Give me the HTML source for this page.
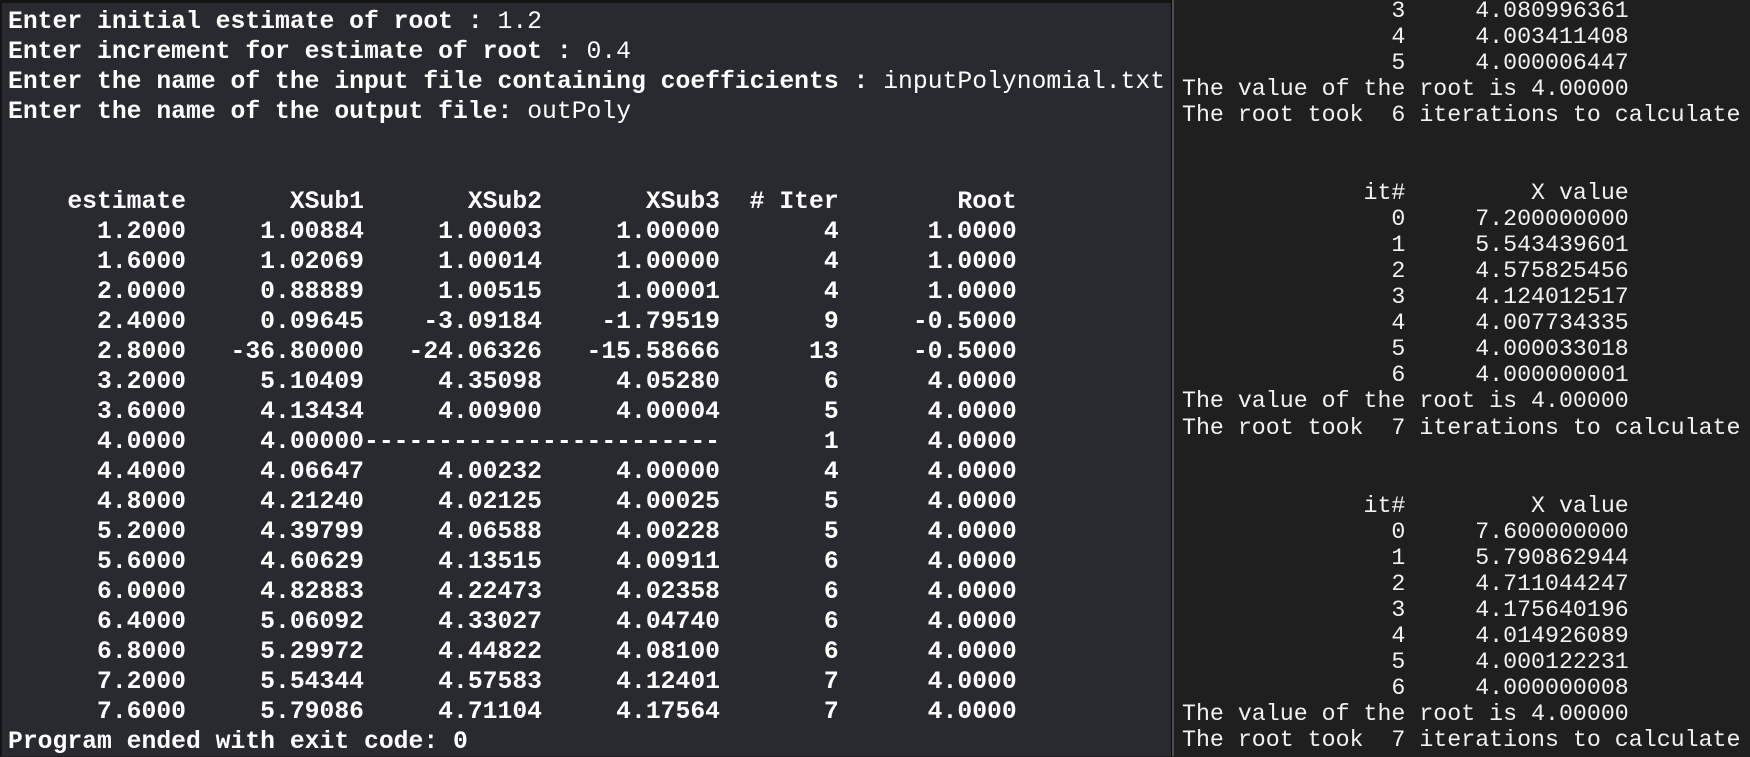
<!DOCTYPE html>
<html><head><meta charset="utf-8"><style>
html,body{margin:0;padding:0;width:1750px;height:756px;overflow:hidden;background:#1f1f1f;}
#left{position:absolute;left:0;top:0;width:1171px;height:756px;background:#292a30;border-top:3px solid #141414;box-sizing:border-box;border-left:2px solid #141414;}
#div1{position:absolute;left:1171px;top:0;width:1px;height:756px;background:#0c0c0c;}
#div2{position:absolute;left:1172px;top:0;width:2px;height:756px;background:#4e4e4e;}
pre{margin:0;position:absolute;font-family:"Liberation Mono",monospace;white-space:pre;}
#lt{left:8px;top:7px;font-size:24.72px;line-height:30px;font-weight:bold;color:#fff;}
#lt span{font-weight:normal;}
#rt{left:1182px;top:-2px;font-size:23.27px;line-height:26.03px;color:#f2f2f2;}
</style></head><body>
<div id="left"></div><div id="div1"></div><div id="div2"></div>
<pre id="lt">Enter initial estimate of root : <span>1.2</span>
Enter increment for estimate of root : <span>0.4</span>
Enter the name of the input file containing coefficients : <span>inputPolynomial.txt</span>
Enter the name of the output file: <span>outPoly</span>


    estimate       XSub1       XSub2       XSub3  # Iter        Root
      1.2000     1.00884     1.00003     1.00000       4      1.0000
      1.6000     1.02069     1.00014     1.00000       4      1.0000
      2.0000     0.88889     1.00515     1.00001       4      1.0000
      2.4000     0.09645    -3.09184    -1.79519       9     -0.5000
      2.8000   -36.80000   -24.06326   -15.58666      13     -0.5000
      3.2000     5.10409     4.35098     4.05280       6      4.0000
      3.6000     4.13434     4.00900     4.00004       5      4.0000
      4.0000     4.00000------------------------       1      4.0000
      4.4000     4.06647     4.00232     4.00000       4      4.0000
      4.8000     4.21240     4.02125     4.00025       5      4.0000
      5.2000     4.39799     4.06588     4.00228       5      4.0000
      5.6000     4.60629     4.13515     4.00911       6      4.0000
      6.0000     4.82883     4.22473     4.02358       6      4.0000
      6.4000     5.06092     4.33027     4.04740       6      4.0000
      6.8000     5.29972     4.44822     4.08100       6      4.0000
      7.2000     5.54344     4.57583     4.12401       7      4.0000
      7.6000     5.79086     4.71104     4.17564       7      4.0000
Program ended with exit code: 0</pre>
<pre id="rt">               3     4.080996361
               4     4.003411408
               5     4.000006447
The value of the root is 4.00000
The root took  6 iterations to calculate


             it#         X value
               0     7.200000000
               1     5.543439601
               2     4.575825456
               3     4.124012517
               4     4.007734335
               5     4.000033018
               6     4.000000001
The value of the root is 4.00000
The root took  7 iterations to calculate


             it#         X value
               0     7.600000000
               1     5.790862944
               2     4.711044247
               3     4.175640196
               4     4.014926089
               5     4.000122231
               6     4.000000008
The value of the root is 4.00000
The root took  7 iterations to calculate</pre>
</body></html>
